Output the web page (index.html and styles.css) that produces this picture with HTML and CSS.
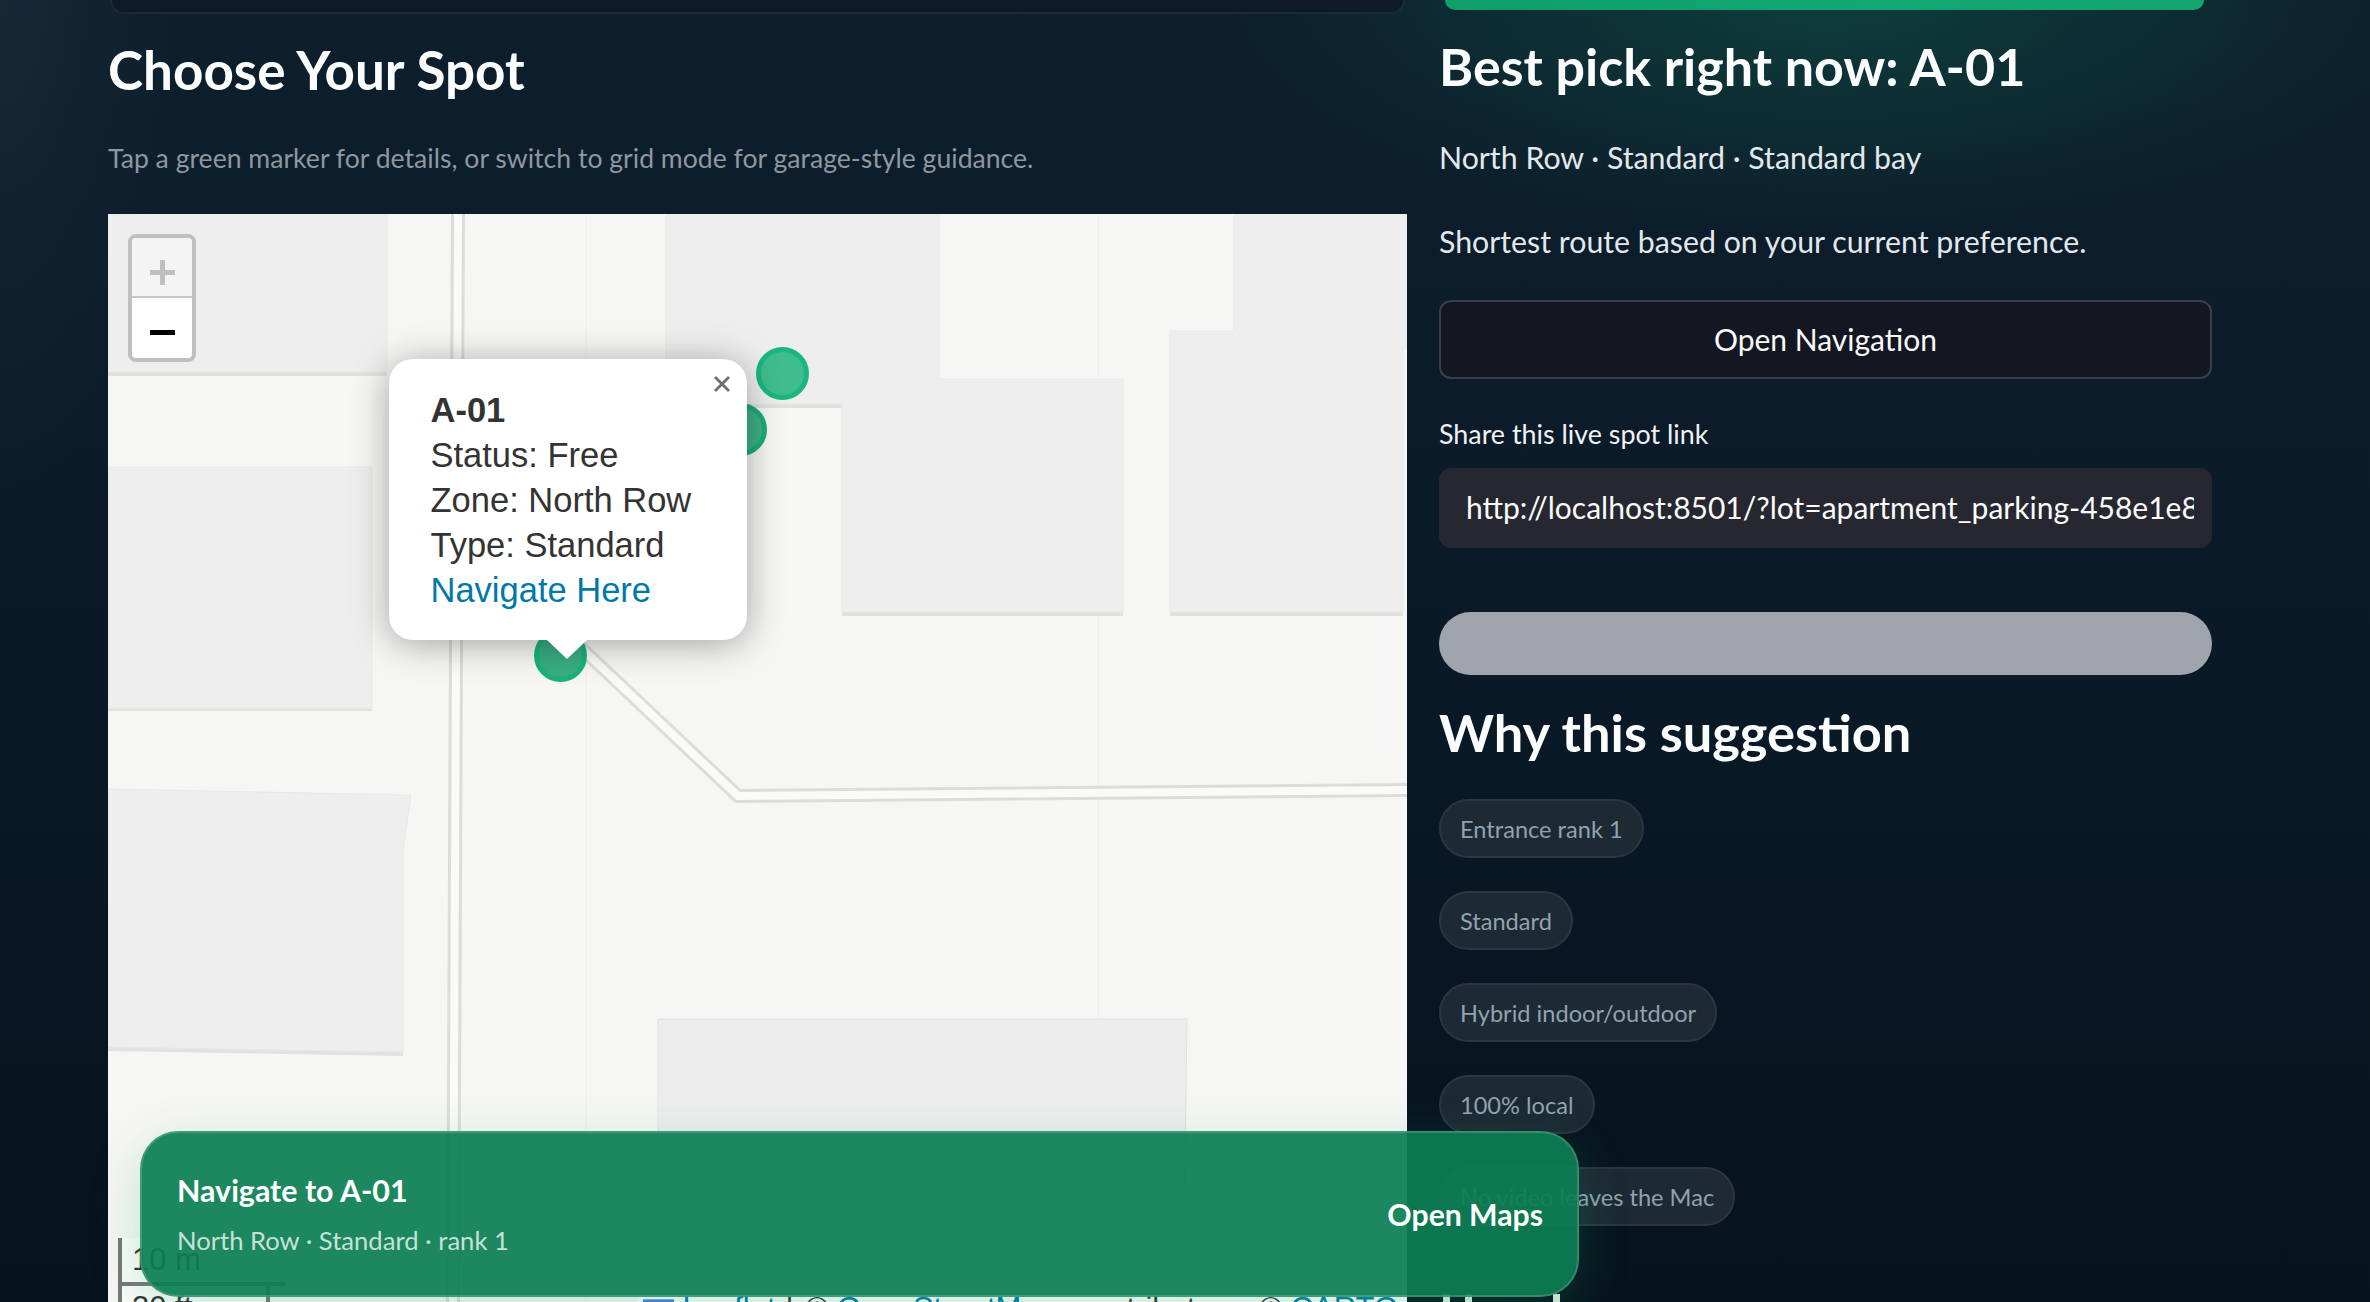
FILE: index.html
```html
<!DOCTYPE html>
<html lang="en">
<head>
<meta charset="utf-8">
<title>Choose Your Spot</title>
<link rel="stylesheet" href="styles.css">
</head>
<body>
<div class="app">
  <div class="glow"></div>
  <main class="columns">
    <section class="left">
      <div class="prev-card"></div>
      <h2 class="title title-left">Choose Your Spot</h2>
      <p class="sub">Tap a green marker for details, or switch to grid mode for garage-style guidance.</p>
      <div class="map">
        <svg class="tiles" width="1299" height="1088" viewBox="108 214 1299 1088">
          <g class="seam"><path d="M586 214V1302M1098.500 214V1302"/></g>
          <g class="bshadow">
            <path d="M108 214H387V376H108Z"/>
            <path d="M666 214H939V379H1123V616H842V408H666Z"/>
            <path d="M1170 331H1234V214H1407V348H1403V616H1170Z"/>
            <path d="M108 467H372V711H108Z"/>
            <path d="M108 789L411 795L403 850V1056L108 1051Z"/>
          </g>
          <g class="bld">
            <path d="M108 214H387V372H108Z"/>
            <path d="M666 214H939V379H1123V612H842V404H666Z"/>
            <path d="M1170 331H1234V214H1407V348H1403V612H1170Z"/>
            <path d="M108 467H372V708H108Z"/>
            <path d="M108 789L411 795L403 850V1052L108 1047Z"/>
            <path class="bld-e" d="M658 1019H1187L1183 1302H658Z"/>
          </g>
          <g class="road-case">
            <path d="M458 214L453 1302"/>
            <path d="M560 628L738 796L1407 790"/>
          </g>
          <g class="road-fill">
            <path d="M458 214L453 1302"/>
            <path d="M560 628L738 796L1407 790"/>
          </g>
        </svg>
        <div class="zoom">
          <div class="zoom-btn zoom-in"><span class="zh"></span><span class="zv"></span></div>
          <div class="zoom-btn zoom-out"><span class="zh"></span></div>
        </div>
        <span class="marker m1"></span>
        <span class="marker m2"></span>
        <span class="marker m3"></span>
        <div class="popup">
          <svg class="popup-x" width="18" height="18" viewBox="0 0 18 18"><path d="M2 2L16 16M16 2L2 16"/></svg>
          <div class="popup-text">
            <b>A-01</b><br>Status: Free<br>Zone: North Row<br>Type: Standard<br><a class="popup-link">Navigate Here</a>
          </div>
          <span class="popup-tip"></span>
        </div>
        <div class="scale">
          <div class="scale-m">10 m</div>
          <div class="scale-ft">30 ft</div>
        </div>
        <div class="attrib"><svg class="flag" width="31" height="22" viewBox="0 0 16 11"><rect width="16" height="5.500" fill="#4C7BE1"/><rect y="5.500" width="16" height="5.500" fill="#FFD500"/></svg> <a class="at-link">Leaflet</a><span class="at-sep">|</span>© <a class="at-link">OpenStreetMap</a> <span class="at-contrib">contributors</span> © <a class="at-link">CARTO</a></div>
      </div>
    </section>
    <aside class="right">
      <div class="green-bar"></div>
      <h2 class="title title-right">Best pick right now: A-01</h2>
      <p class="meta">North Row · Standard · Standard bay</p>
      <p class="meta meta-2">Shortest route based on your current preference.</p>
      <div class="btn">Open Navigation</div>
      <div class="label">Share this live spot link</div>
      <div class="input"><span class="input-text">http://localhost:8501/?lot=apartment_parking-458e1e8d</span></div>
      <div class="pill"></div>
      <h2 class="title title-why">Why this suggestion</h2>
      <div class="chips">
        <span class="chip">Entrance rank 1</span>
        <span class="chip">Standard</span>
        <span class="chip">Hybrid indoor/outdoor</span>
        <span class="chip">100% local</span>
        <span class="chip">No video leaves the Mac</span>
      </div>
      <div class="next"><i class="stem s1"></i><i class="stem s2"></i><i class="stem s3"></i></div>
    </aside>
  </main>
  <div class="navbar">
    <div class="nav-text">
      <div class="nav-title">Navigate to A-01</div>
      <div class="nav-sub">North Row · Standard · rank 1</div>
    </div>
    <div class="nav-action">Open Maps</div>
  </div>
</div>
</body>
</html>
```
FILE: styles.css
```css
* { box-sizing: border-box; }
html, body { margin: 0; padding: 0; height: 100%; }
body {
  overflow: hidden;
  font-family: Lato, "Noto Sans", sans-serif;
  background: #08141f;
}
.app {
  position: relative;
  width: 2370px;
  height: 1302px;
  overflow: hidden;
  background: linear-gradient(180deg, #0d1e2d 0%, #0a1a28 45%, #07131e 100%);
}
.glow {
  position: absolute;
  inset: 0;
  background:
    radial-gradient(620px 240px at 1830px 0px, rgba(18,150,100,.26), rgba(18,150,100,0) 100%),
    radial-gradient(180px 500px at 0px 0px, rgba(120,150,160,.09), rgba(120,150,160,0) 100%);
}
.columns {
  position: relative;
  display: flex;
  gap: 32px;
  padding-left: 108px;
  height: 1302px;
}
.left { width: 1299px; flex: none; display: flex; flex-direction: column; }
.right { width: 773px; flex: none; display: flex; flex-direction: column; }
.left > *, .right > * { flex: none; }

.prev-card {
  height: 14px;
  margin: 0 2px;
  border: 2px solid #1d2b39;
  border-top: 0;
  border-radius: 0 0 24px 24px;
  background: #0c1a29;
}
.title {
  margin: 0;
  font-weight: 700;
  color: #fbfcfc;
  font-size: 52.400px;
  line-height: 68px;
}
.title-left { margin-top: 22px; font-size: 53px; }
.sub {
  margin: 34px 0 0;
  font-size: 26.600px;
  line-height: 40px;
  color: #8f979f;
}
.map {
  position: relative;
  margin-top: 36px;
  width: 1299px;
  height: 1088px;
  overflow: hidden;
  background: #f6f6f4;
}
.tiles { display: block; }
.seam path { stroke: #efefed; stroke-width: 1; fill: none; }
.bshadow path { fill: #e1e1df; }
.bld path { fill: #eeeeee; stroke: #e8e8e6; stroke-width: 1; }
.bld .bld-e { fill: #ededed; stroke: #e0e0de; }
.road-case path { fill: none; stroke: #dcdcda; stroke-width: 14; stroke-linejoin: miter; }
.road-fill path { fill: none; stroke: #fafaf9; stroke-width: 8; stroke-linejoin: miter; }

.zoom {
  position: absolute;
  left: 20px;
  top: 20px;
  width: 68px;
  height: 128px;
  border: 4px solid #bfbfbf;
  border-radius: 8px;
  overflow: hidden;
  background: #fff;
}
.zoom-btn { position: relative; height: 60px; }
.zoom-in { background: #f4f4f4; border-bottom: 2px solid #c6c6c6; }
.zh, .zv { position: absolute; }
.zh { left: 18px; width: 25px; height: 5px; }
.zoom-in .zh { top: 32px; background: #bfbfbf; }
.zoom-in .zv { left: 28px; top: 22px; width: 5px; height: 25px; background: #bfbfbf; }
.zoom-out .zh { top: 32px; background: #000; }

.marker {
  position: absolute;
  width: 53px;
  height: 53px;
  border-radius: 50%;
  border: 5px solid #19b680;
  background: #3fbd8e;
}
.m1 { left: 648px; top: 133px; }
.m2 { left: 606px; top: 189px; background: #3fb387; border-color: #1cad7b; }
.m3 { left: 426px; top: 415px; background: #39ad82; border-color: #1ab27d; }

.popup {
  position: absolute;
  left: 281px;
  top: 145px;
  width: 358px;
  height: 281px;
  background: #fff;
  border-radius: 24px;
  box-shadow: 0 4px 36px rgba(0,0,0,.34);
  color: #333;
  font-family: "Liberation Sans", Arial, sans-serif;
}
.popup-text {
  padding: 29px 0 0 41.500px;
  font-size: 34.500px;
  line-height: 45px;
}
.popup-link { color: #0078a8; }
.popup-x {
  position: absolute;
  right: 16px;
  top: 16px;
  stroke: #6f6f6f;
  stroke-width: 2.800;
  fill: none;
}
.popup-tip {
  position: absolute;
  left: 158px;
  top: 281px;
  width: 0;
  height: 0;
  border-left: 20px solid transparent;
  border-right: 20px solid transparent;
  border-top: 19px solid #fff;
}

.scale {
  position: absolute;
  left: 10px;
  top: 1024px;
  font-family: "Liberation Sans", Arial, sans-serif;
  font-size: 31px;
  color: #333;
  line-height: 44px;
}
.scale-m {
  width: 167px;
  height: 48px;
  padding-left: 10px;
  border: 4px solid #777;
  border-top: 0;
  border-right: 0;
  background: rgba(255,255,255,.5);
}
.scale-ft {
  width: 152px;
  height: 40px;
  padding-left: 10px;
  border: 4px solid #777;
  border-top: 0;
  border-bottom: 0;
  background: rgba(255,255,255,.5);
}
.attrib {
  position: absolute;
  right: 0;
  top: 1078px;
  height: 30px;
  padding: 0 9px 0 6px;
  white-space: pre;
  background: rgba(255,255,255,.8);
  font-family: "Liberation Sans", Arial, sans-serif;
  font-size: 31px;
  line-height: 34px;
  color: #333;
}
.flag { vertical-align: -2px; }
.at-link { color: #0078a8; }
.at-sep { margin: 0 12px 0 10px; }
.at-contrib { margin: 0 12px; }

.green-bar {
  height: 10px;
  margin: 0 8px 0 6px;
  border-radius: 0 0 20px 20px;
  background: linear-gradient(90deg, #0f9f6b, #12a871 60%, #12a46e);
}
.title-right { margin-top: 22px; font-size: 52px; }
.meta {
  margin: 36px 0 0;
  font-size: 30.300px;
  line-height: 42px;
  color: #e4e8ec;
}
.meta-2 { margin-top: 42px; }
.btn {
  margin-top: 38px;
  height: 79px;
  padding-bottom: 2px;
  border: 2px solid #3b3e4a;
  border-radius: 12px;
  background: #141722;
  display: flex;
  align-items: center;
  justify-content: center;
  color: #fafafa;
  font-size: 30px;
}
.label {
  margin-top: 35px;
  font-size: 26.850px;
  line-height: 40px;
  color: #f0f2f4;
}
.input {
  margin-top: 14px;
  height: 80px;
  border-radius: 12px;
  background: #262730;
  padding: 0 18px 2px 27px;
  display: flex;
  align-items: center;
  overflow: hidden;
}
.input-text {
  display: block;
  width: 100%;
  overflow: hidden;
  white-space: nowrap;
  font-size: 30px;
  color: #fafafa;
}
.pill {
  margin-top: 64px;
  height: 63px;
  border-radius: 32px;
  background: #a0a5ad;
}
.title-why { margin-top: 23px; }
.chips {
  margin-top: 33px;
  display: flex;
  flex-direction: column;
  align-items: flex-start;
  gap: 33px;
}
.chip {
  height: 59px;
  padding: 0 19px;
  border: 2px solid #2b3640;
  border-radius: 30px;
  background: #1d2933;
  display: flex;
  align-items: center;
  font-size: 23.600px;
  color: #8fa3b0;
  white-space: nowrap;
}
.next {
  margin-top: 68px;
  height: 8px;
  display: flex;
}
.stem { display: block; width: 7px; height: 8px; background: #d9e8e1; }
.s1 { margin-left: 4px; }
.s2 { margin-left: 15px; }
.s3 { margin-left: 81px; }

.navbar {
  position: absolute;
  left: 140px;
  top: 1131px;
  width: 1439px;
  height: 166px;
  padding: 0 34px 0 35px;
  display: flex;
  align-items: center;
  justify-content: space-between;
  border: 2px solid rgba(255,255,255,.16);
  border-radius: 38px;
  background: rgba(12,126,84,.93);
  box-shadow: 0 14px 50px rgba(16,163,107,.22);
}
.nav-title {
  font-size: 30.400px;
  font-weight: 700;
  line-height: 40px;
  color: #fff;
}
.nav-sub {
  margin-top: 12px;
  font-size: 25.600px;
  line-height: 36px;
  color: rgba(255,255,255,.76);
}
.nav-action {
  font-size: 30.200px;
  font-weight: 700;
  color: #fff;
}
```
